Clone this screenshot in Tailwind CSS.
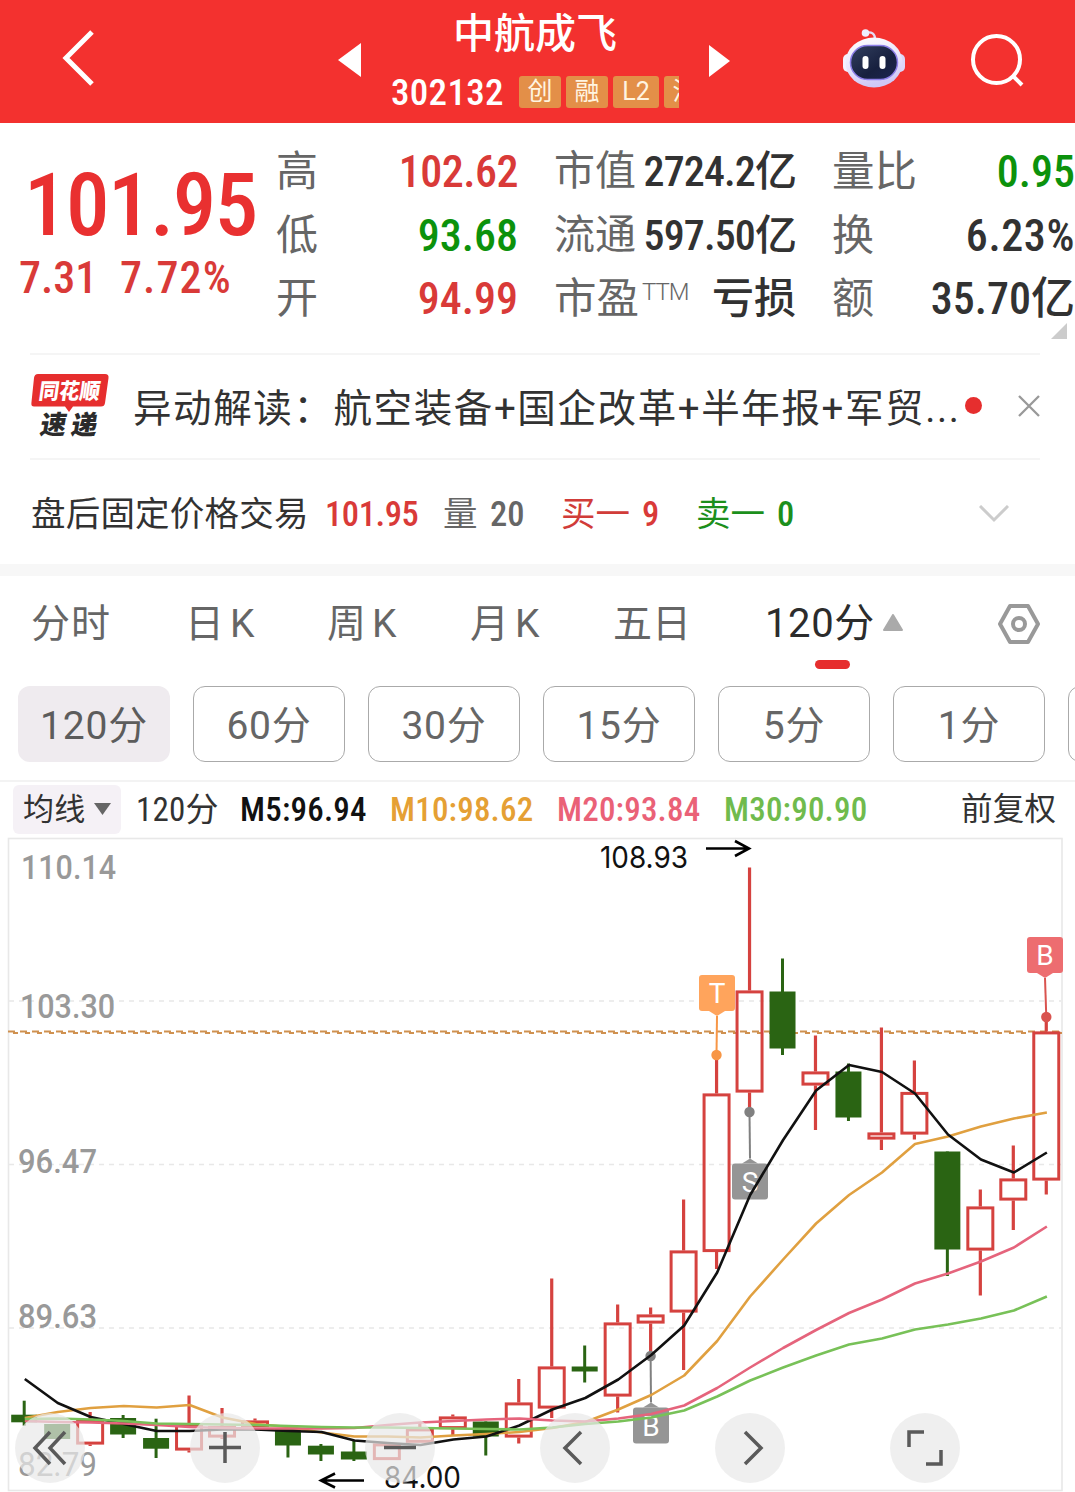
<!DOCTYPE html>
<html lang="zh-CN">
<head>
    <meta charset="UTF-8">
    <meta name="viewport" content="width=device-width, initial-scale=1.0">
    <title>中航成飞 302132</title>
    <script src="https://cdn.jsdelivr.net/npm/@tailwindcss/browser@4"></script>
</head>
<body class="w-[1075px] h-[1492px] overflow-hidden bg-white text-[#323232] whitespace-nowrap font-['Roboto','Noto_Sans_CJK_SC',sans-serif]">

    <!-- Header -->
    <header class="flex h-[123px] bg-[#f3312f] text-white">
        <div class="w-[338px] pl-[60px] pt-[28px]">
            <svg width="36" height="60" viewBox="0 0 36 60" fill="none" stroke="#fff" stroke-width="5"><path d="M32 4 L6 30 L32 56"/></svg>
        </div>
        <svg class="mt-[43px]" width="23" height="34" viewBox="0 0 23 34"><path d="M0 17 L23 0 V34 Z" fill="#fff"/></svg>
        <div class="w-[348px] pt-[11px]">
            <h1 class="h-[46px] pl-[92px] text-[41px] leading-[46px] font-medium">中航成飞</h1>
            <div class="mt-[19px] flex h-[32px] w-[318px] items-center overflow-x-clip pl-[30px]">
                <span class="w-[128px] shrink-0 pt-[2px] text-[37px] leading-[44px] font-medium font-stretch-87% tracking-[0.3px]">302132</span>
                <div class="flex shrink-0 gap-[5px] text-[25px] leading-[32px] text-[#fff4e0]">
                    <span class="w-[42px] rounded-[3px] bg-[#e38f48] text-center">创</span>
                    <span class="w-[42px] rounded-[3px] bg-[#e38f48] text-center">融</span>
                    <span class="w-[46px] rounded-[3px] bg-[#e38f48] text-center">L2</span>
                    <span class="w-[42px] rounded-[3px] bg-[#e38f48] text-center">沪</span>
                </div>
            </div>
        </div>
        <svg class="mt-[45px]" width="21" height="32" viewBox="0 0 21 32"><path d="M21 16 L0 0 V32 Z" fill="#fff"/></svg>
        <svg class="mt-[28px] ml-[112px]" width="64" height="62" viewBox="0 0 64 62">
            <defs>
                <linearGradient id="shell" x1="0" y1="0" x2="0.3" y2="1"><stop offset="0" stop-color="#fff"/><stop offset="0.6" stop-color="#e9e4fb"/><stop offset="1" stop-color="#cfc8f6"/></linearGradient>
                <linearGradient id="face" x1="0" y1="0" x2="1" y2="1"><stop offset="0" stop-color="#33405f"/><stop offset="0.6" stop-color="#17203f"/><stop offset="1" stop-color="#1c2550"/></linearGradient>
            </defs>
            <path d="M23 5 C30 3 33 6 33 11" fill="none" stroke="#e4dcf5" stroke-width="2.4"/>
            <circle cx="23.500" cy="5" r="3.800" fill="#eef0ff"/>
            <rect x="1" y="26" width="10" height="18" rx="5" fill="#f4f1fd"/>
            <rect x="53" y="26" width="10" height="18" rx="5" fill="#dcd6f8"/>
            <ellipse cx="32" cy="34.500" rx="28.500" ry="25" fill="url(#shell)"/>
            <rect x="8.500" y="17.500" width="47" height="34" rx="17" fill="url(#face)" stroke="#8d7fe8" stroke-width="1.500"/>
            <rect x="20.500" y="28" width="6" height="13" rx="3" fill="#fff"/>
            <rect x="37.500" y="28" width="6" height="13" rx="3" fill="#fff"/>
        </svg>
        <svg class="mt-[30px] ml-[62px]" width="60" height="60" viewBox="0 0 60 60" fill="none" stroke="#fff" stroke-width="4"><circle cx="28.500" cy="29.500" r="23.500"/><path d="M44.500 45.500 L54 55"/></svg>
    </header>

    <!-- Quote -->
    <section class="flex h-[230px]">
        <div class="w-[276px] pt-[37px]">
            <div class="h-[90px] pl-[24px] text-[87px] leading-[90px] font-medium font-stretch-87% tracking-[-1.5px] text-[#e93030]">101.95</div>
            <div class="flex h-[56px] pl-[19px] text-[44px] leading-[56px] font-medium font-stretch-87% text-[#d93a38]">
                <span class="w-[101px]">7.31</span>
                <span class="tracking-[1.1px]">7.72%</span>
            </div>
        </div>
        <div class="w-[242px] pt-[17px] text-[44px] leading-[63.5px] font-medium font-stretch-87%">
            <div class="flex h-[63.5px] justify-between"><span class="text-[42px] font-normal text-[#666]">高</span><span class="pt-px tracking-[-0.5px] text-[#d93a38]">102.62</span></div>
            <div class="flex h-[63.5px] justify-between"><span class="text-[42px] font-normal text-[#666]">低</span><span class="pt-px text-[#0c920c]">93.68</span></div>
            <div class="flex h-[63.5px] justify-between"><span class="text-[42px] font-normal text-[#666]">开</span><span class="pt-px text-[#d93a38]">94.99</span></div>
        </div>
        <div class="ml-[36px] w-[242px] pt-[17px] text-[42px] leading-[63.5px] font-medium font-stretch-87%">
            <div class="flex h-[63.5px] justify-between"><span class="text-[41px] font-normal text-[#666]">市值</span><span class="tracking-[-0.9px]">2724.2亿</span></div>
            <div class="flex h-[63.5px] justify-between"><span class="text-[41px] font-normal text-[#666]">流通</span><span class="tracking-[-0.9px]">597.50亿</span></div>
            <div class="flex h-[63.5px] justify-between"><span class="flex text-[42.500px] font-normal text-[#666]">市盈<span class="h-[50px] pl-[3px] text-[24px] leading-[50px] font-light font-stretch-100% tracking-[-1px]">TTM</span></span><span>亏损</span></div>
        </div>
        <div class="relative ml-[36px] w-[243px] pt-[17px] text-[44px] leading-[63.5px] font-medium font-stretch-87%">
            <div class="flex h-[63.5px] justify-between"><span class="text-[42.500px] font-normal text-[#666]">量比</span><span class="pt-px text-[#0c920c]">0.95</span></div>
            <div class="flex h-[63.5px] justify-between"><span class="text-[42px] font-normal text-[#666]">换</span><span class="pt-px tracking-[0.6px]">6.23%</span></div>
            <div class="flex h-[63.5px] justify-between"><span class="text-[42px] font-normal text-[#666]">额</span><span class="pt-px">35.70亿</span></div>
            <svg class="absolute right-[8px] bottom-[14px]" width="16" height="16" viewBox="0 0 16 16"><path d="M16 0 V16 H0 Z" fill="#ccc"/></svg>
        </div>
    </section>

    <!-- News strip -->
    <section class="mx-[30px] flex h-[107px] w-[1010px] items-center border-y-2 border-[#f5f5f5]">
        <svg class="mb-[2px] overflow-visible" width="80" height="66" viewBox="0 0 80 66">
            <path d="M8 1 H75 Q79 1 78.500 5 L75 30 Q74.500 33.500 71 33.500 H43 L39 39 L35 33.500 H4 Q1 33.500 1.400 30 L4 5 Q4.500 1 8 1 Z" fill="#e62e2e"/>
            <g font-family="'Noto Sans CJK SC', sans-serif" font-weight="900">
                <text transform="translate(8 26) skewX(-8)" font-size="22" fill="#fff" textLength="61" lengthAdjust="spacingAndGlyphs">同花顺</text>
                <text transform="translate(9 61) skewX(-10)" font-size="26" fill="#2b2b2b" textLength="57">速递</text>
            </g>
        </svg>
        <p class="ml-[23px] w-[832px] pt-[4px] text-[38.5px] leading-[56px] tracking-[1.6px]">异动解读：航空装备+国企改革+半年报+军贸...</p>
        <span class="mb-[2px] size-[17px] shrink-0 rounded-full bg-[#e62e2e]"></span>
        <svg class="mb-[2px] ml-[36px] shrink-0" width="22" height="22" viewBox="0 0 22 22" stroke="#999" stroke-width="2.300"><path d="M1 1 L21 21 M21 1 L1 21"/></svg>
    </section>

    <!-- After-hours trading -->
    <section class="flex h-[104px] items-center pt-[3px] pl-[31px] text-[34.500px] leading-[60px]">
        <span class="w-[294px] tracking-[0.2px]">盘后固定价格交易</span>
        <span class="w-[118px] font-medium font-stretch-87% tracking-[-0.4px] text-[#d93a38]">101.95</span>
        <span class="w-[47px] text-[#666]">量</span>
        <span class="w-[71px] font-medium font-stretch-87% text-[#666]">20</span>
        <span class="w-[81px] text-[#d13c39]">买一</span>
        <span class="w-[54px] font-medium font-stretch-87% text-[#d93a38]">9</span>
        <span class="w-[81px] text-[#1c8f1c]">卖一</span>
        <span class="w-[202px] font-medium font-stretch-87% text-[#1c8f1c]">0</span>
        <svg width="30" height="18" viewBox="0 0 30 18" fill="none" stroke="#ccc" stroke-width="3"><path d="M1 1 L15 15 L29 1"/></svg>
    </section>
    <div class="h-[12px] bg-[#f7f7f7]"></div>

    <!-- Period tabs -->
    <nav class="flex h-[104px] items-start pt-[20px] pl-[31px] text-[39px] leading-[56px] text-[#666]">
        <span class="w-[154px] tracking-[1px]">分时</span>
        <span class="w-[142px] tracking-[6px]">日K</span>
        <span class="w-[143px] tracking-[6px]">周K</span>
        <span class="w-[143px] tracking-[6px]">月K</span>
        <span class="w-[152px]">五日</span>
        <div class="flex w-[232px] flex-col">
            <div class="flex items-center text-[#2c2c2c]"><span class="w-[118px] text-[40px] tracking-[0.6px]">120分</span><svg class="mb-[3px]" width="20" height="17" viewBox="0 0 20 17"><path d="M10 1 L19 16 H1 Z" fill="#aaa" stroke="#aaa" stroke-width="2" stroke-linejoin="round"/></svg></div>
            <span class="mt-[8px] ml-[50px] h-[9px] w-[35px] rounded-full bg-[#e62e2e]"></span>
        </div>
        <svg class="mt-[7px]" width="44" height="42" viewBox="0 0 44 42" fill="none" stroke="#999" stroke-width="4" stroke-linejoin="round"><path d="M13 3 H31 L41 21 L31 39 H13 L3 21 Z"/><circle cx="22" cy="21" r="6" stroke-width="4"/></svg>
    </nav>

    <!-- Minute chips -->
    <div class="flex h-[102px] gap-[23px] overflow-hidden border-b-2 border-[#f3f3f3] pt-[6px] pl-[18px] text-[39px] leading-[74px] tracking-[0.8px] text-[#666]">
        <span class="h-[76px] w-[152px] shrink-0 rounded-xl bg-[#efebef] pt-[3px] text-center text-[#5c5c5c]">120分</span>
        <span class="h-[76px] w-[152px] shrink-0 rounded-xl border border-[#aaa] pt-[2px] text-center">60分</span>
        <span class="h-[76px] w-[152px] shrink-0 rounded-xl border border-[#aaa] pt-[2px] text-center">30分</span>
        <span class="h-[76px] w-[152px] shrink-0 rounded-xl border border-[#aaa] pt-[2px] text-center">15分</span>
        <span class="h-[76px] w-[152px] shrink-0 rounded-xl border border-[#aaa] pt-[2px] text-center">5分</span>
        <span class="h-[76px] w-[152px] shrink-0 rounded-xl border border-[#aaa] pt-[2px] text-center">1分</span>
        <span class="h-[76px] w-[152px] shrink-0 rounded-xl border border-[#aaa]"></span>
    </div>

    <!-- Moving average legend -->
    <div class="flex h-[54px] items-center pl-[13px] text-[33px] leading-[49px] font-medium font-stretch-87% tracking-[0.2px]">
        <div class="flex h-[49px] w-[108px] items-center rounded-md bg-[#f5f1f6] pl-[10px] text-[31px] font-normal"><span class="w-[71px] pt-px">均线</span><svg width="17" height="12" viewBox="0 0 17 12"><path d="M0 0 H17 L8.500 12 Z" fill="#666"/></svg></div>
        <span class="ml-[15px] w-[104px] pt-px font-normal">120分</span>
        <span class="w-[150px] pt-px text-[#111]">M5:96.94</span>
        <span class="w-[167px] pt-px text-[#e5a034]">M10:98.62</span>
        <span class="w-[167px] pt-px text-[#ea6177]">M20:93.84</span>
        <span class="w-[237px] pt-px text-[#70bb4d]">M30:90.90</span>
        <span class="pt-px text-[31.500px] font-normal">前复权</span>
    </div>

    <!-- K-line chart -->
    <div class="relative h-[656px]">
        <svg id="chart" class="block" width="1075" height="656" viewBox="0 836 1075 656" font-family="Roboto, 'Noto Sans CJK SC', sans-serif">
            <rect x="8.500" y="838.500" width="1053.500" height="652" fill="none" stroke="#e8e8e8" stroke-width="1.600"/>
            <path d="M9 1001 H1061 M9 1164.500 H1061 M9 1328 H1061" stroke="#e8e8e8" stroke-width="1.500" stroke-dasharray="5 5"/>
            <g font-size="33" fill="#999" font-weight="500">
                <text x="21" y="879" textLength="95" lengthAdjust="spacingAndGlyphs">110.14</text>
                <text x="20" y="1018" textLength="95" lengthAdjust="spacingAndGlyphs">103.30</text>
                <text x="18" y="1173" textLength="79" lengthAdjust="spacingAndGlyphs">96.47</text>
                <text x="18" y="1328" textLength="79" lengthAdjust="spacingAndGlyphs">89.63</text>
                <text x="18" y="1475.500" font-weight="400" textLength="79" lengthAdjust="spacingAndGlyphs">82.79</text>
            </g>
            <g stroke="#cf9150" stroke-width="2" stroke-dasharray="7 5"><path d="M8 1031.500 H1062"/><path d="M13 1033 H1062" stroke-dasharray="5 7"/></g>
            <g id="candles"></g>
            <g id="markers" font-size="28" text-anchor="middle" fill="#fff"></g>
            <g id="averages" fill="none" stroke-width="2.600" stroke-linejoin="round"></g>
            <g font-size="30" fill="#111" font-family="Inter, sans-serif">
                <text x="600" y="867.500" textLength="88" lengthAdjust="spacingAndGlyphs">108.93</text>
                <text x="384" y="1487.500" textLength="77" lengthAdjust="spacingAndGlyphs">84.00</text>
            </g>
            <path d="M706 848.500 H749 M735 841 L749 848.500 L735 856 M364 1480.500 H322 M335 1473.500 L321 1480.500 L335 1487.500" fill="none" stroke="#000" stroke-width="2.600"/>
        </svg>

        <!-- Chart controls -->
        <div class="absolute top-[577px] left-[15px] flex gap-[105px]">
            <button class="size-[70px] rounded-full bg-[#e8e8e8]/70"><svg width="70" height="70" viewBox="0 0 70 70" fill="none" stroke="#5a5a5a" stroke-width="3.500"><path d="M35 19 L20 35 L35 51 M50 19 L35 35 L50 51"/></svg></button>
            <button class="size-[70px] rounded-full bg-[#e8e8e8]/70"><svg width="70" height="70" viewBox="0 0 70 70" fill="none" stroke="#5a5a5a" stroke-width="3.500"><path d="M19 34.500 H51 M35 19 V50"/></svg></button>
            <button class="size-[70px] rounded-full bg-[#e8e8e8]/70"><svg width="70" height="70" viewBox="0 0 70 70" fill="none" stroke="#5a5a5a" stroke-width="3.500"><path d="M19 34.500 H51"/></svg></button>
            <button class="size-[70px] rounded-full bg-[#e8e8e8]/70"><svg width="70" height="70" viewBox="0 0 70 70" fill="none" stroke="#5a5a5a" stroke-width="3.500"><path d="M41 19 L25 35 L41 51"/></svg></button>
            <button class="size-[70px] rounded-full bg-[#e8e8e8]/70"><svg width="70" height="70" viewBox="0 0 70 70" fill="none" stroke="#5a5a5a" stroke-width="3.500"><path d="M30 19 L46 35 L30 51"/></svg></button>
            <button class="size-[70px] rounded-full bg-[#e8e8e8]/70"><svg width="70" height="70" viewBox="0 0 70 70" fill="none" stroke="#5a5a5a" stroke-width="3.500"><path d="M19 34 V19 H34 M51 37 V51 H36"/></svg></button>
        </div>
    </div>

    <script>
        const step = 32.97;
        const cx = i => 24.2 + i * step;

        // [up, high, top, bottom, low]
        const candles = [
            [0, 1400.7, 1414.7, 1422.3, 1425.7], [0, 1424, 1424, 1439, 1439],
            [1, 1412, 1419.5, 1444.5, 1446], [0, 1415, 1418, 1434.5, 1438],
            [0, 1418.7, 1438, 1448.7, 1458], [1, 1395.5, 1424, 1450.5, 1452.5],
            [1, 1408, 1426, 1437.5, 1439], [1, 1418.5, 1420.5, 1427, 1427],
            [0, 1429, 1429, 1445.5, 1457.5], [0, 1444, 1445.7, 1454.5, 1461],
            [0, 1441, 1451.5, 1459.5, 1461], [1, 1443.5, 1443.5, 1460, 1460],
            [1, 1422.6, 1428.5, 1442.7, 1442.7], [1, 1414.6, 1416.5, 1429, 1435],
            [0, 1421.5, 1421.5, 1436.5, 1455.5], [1, 1379, 1402.5, 1437.5, 1443.5],
            [1, 1278.5, 1366.5, 1408.5, 1418], [0, 1345.5, 1366.5, 1371.5, 1382.5],
            [1, 1304.5, 1322.5, 1396.5, 1412.5], [1, 1307.5, 1314.5, 1323.5, 1355],
            [1, 1199.5, 1250.5, 1312.5, 1370], [1, 1055.5, 1093.5, 1252, 1269],
            [1, 867.5, 990.5, 1092.5, 1112], [0, 958.5, 991.5, 1048.5, 1055],
            [1, 1035.5, 1071.5, 1085.5, 1130], [0, 1063.5, 1071.5, 1117.5, 1121],
            [1, 1027.5, 1132.5, 1139.5, 1150], [1, 1060.5, 1092, 1134.5, 1139.5],
            [0, 1151.5, 1151.5, 1249.5, 1276], [1, 1189.5, 1206.5, 1250.5, 1295.5],
            [1, 1145.5, 1178.5, 1200.5, 1230], [1, 1018, 1031.5, 1180.5, 1194.5]
        ];
        document.getElementById('candles').innerHTML = candles.map(([up, high, top, bottom, low], i) => {
            const x = cx(i);
            if (!up) {
                return `<path d="M${x} ${high} V${low}" stroke="#2a6413" stroke-width="3"/><rect x="${x - 13}" y="${top}" width="26" height="${bottom - top}" fill="#2a6413"/>`;
            }
            return `<path d="M${x} ${high} V${top} M${x} ${bottom} V${low}" stroke="#d5423f" stroke-width="3.2"/><rect x="${x - 12.5}" y="${top + 1.4}" width="25" height="${bottom - top - 2.8}" fill="none" stroke="#d5423f" stroke-width="3"/>`;
        }).join('');

        const averages = {
            '#e0a040': [1418, 1412, 1408, 1406, 1407.5, 1405, 1417.5, 1424, 1427, 1432.5, 1436.5, 1436.5, 1437.5, 1435.5, 1434, 1432, 1428, 1422, 1409.5, 1395, 1375.5, 1341, 1296.5, 1259.5, 1223.5, 1195, 1172.5, 1144, 1136.5, 1126.5, 1118.5, 1112.5],
            '#111': [1379, 1403, 1417, 1424, 1431, 1431, 1429.5, 1429.5, 1431, 1432, 1440.5, 1443, 1445, 1439.5, 1436.5, 1425.5, 1409.5, 1398, 1379.5, 1355, 1325.5, 1272.5, 1195, 1140, 1090.5, 1065, 1072, 1093.5, 1134.5, 1159.5, 1172.5, 1152.5],
            '#e5647c': [1421, 1422, 1422.5, 1423.5, 1425, 1427, 1428, 1428.5, 1428.5, 1428.5, 1428, 1425, 1422.5, 1421, 1419.5, 1418.5, 1420.5, 1421.5, 1418.5, 1414, 1405.5, 1388, 1367.5, 1348, 1330, 1313, 1299.5, 1283.5, 1273.5, 1261.5, 1247.5, 1226.5],
            '#78c158': [1419, 1418.5, 1419.5, 1421, 1423.5, 1424, 1424.5, 1425, 1426, 1427, 1427.5, 1427.5, 1428, 1428.5, 1429, 1429.5, 1427.5, 1424, 1421.5, 1417.5, 1410.5, 1396.5, 1380.5, 1367.5, 1355.5, 1344.5, 1338.5, 1329.5, 1324.5, 1318.5, 1310.5, 1296.5]
        };
        document.getElementById('averages').innerHTML = Object.entries(averages).map(([color, ys]) =>
            `<polyline stroke="${color}" points="${ys.map((y, i) => `${cx(i) + 0.6},${y}`).join(' ')}"/>`
        ).join('');

        // Trade flags: box top, dot height, and which side the pointer is on
        const markers = [
            { label: 'T', x: 717, top: 975, dotX: 716.5, dot: 1055, color: '#ffa45c', line: '#f79646' },
            { label: 'B', x: 1045, top: 937, dotX: 1046.3, dot: 1017, color: '#ed6d70', line: '#d9534f' },
            { label: 'S', x: 750, top: 1163.5, dotX: 749.5, dot: 1112, color: '#959595', line: '#808080' },
            { label: 'B', x: 651, top: 1407.5, dotX: 650.6, dot: 1356, color: '#959595', line: '#808080' }
        ];
        document.getElementById('markers').innerHTML = markers.map(m => {
            const below = m.dot < m.top;
            const edge = below ? m.top : m.top + 36;
            const tip = below ? edge - 5 : edge + 5;
            return `<path d="M${m.x} ${tip} L${m.dotX} ${m.dot}" stroke="${m.line}" stroke-width="2"/>
                <circle cx="${m.dotX}" cy="${m.dot}" r="5.2" fill="${m.line}"/>
                <rect x="${m.x - 18}" y="${m.top}" width="36" height="36" rx="3" fill="${m.color}"/>
                <path d="M${m.x - 8} ${edge} L${m.x} ${tip} L${m.x + 8} ${edge} Z" fill="${m.color}"/>
                <text x="${m.x}" y="${m.top + 28}">${m.label}</text>`;
        }).join('');
    </script>
</body>
</html>
